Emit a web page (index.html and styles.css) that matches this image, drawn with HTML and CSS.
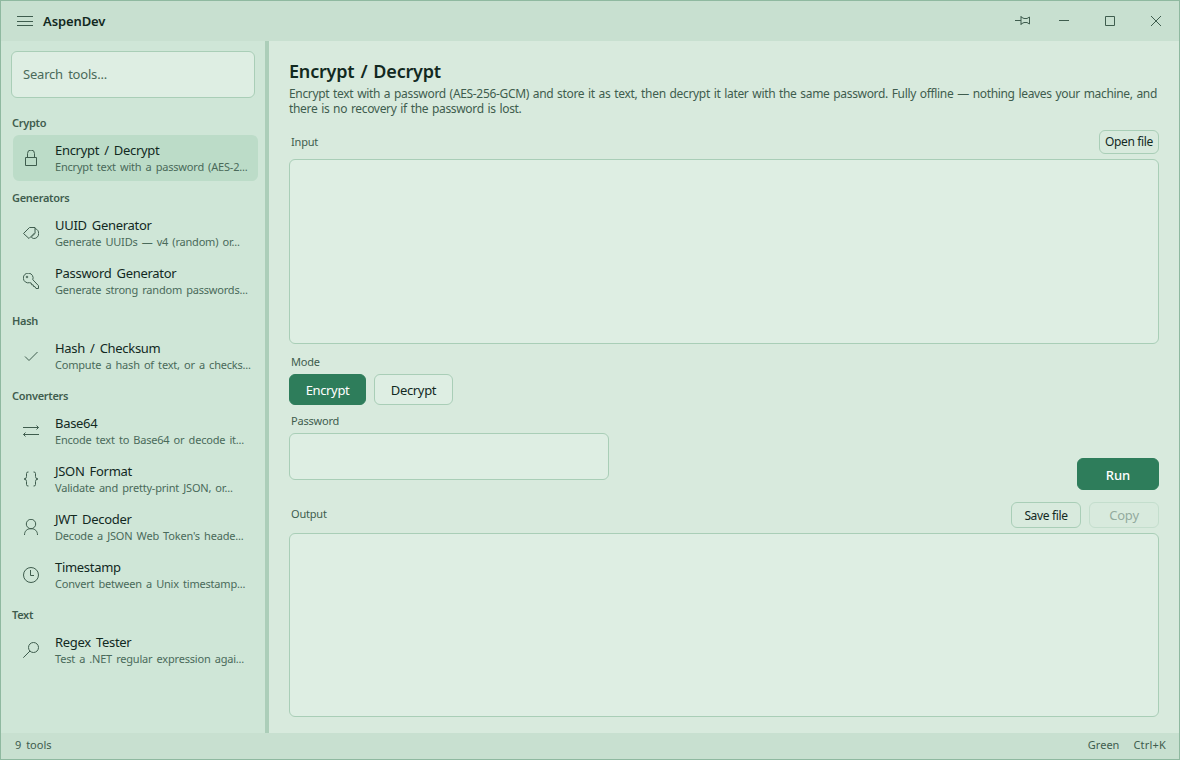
FILE: index.html
```html
<!DOCTYPE html>
<html lang="en">
<head>
    <meta charset="UTF-8">
    <meta name="viewport" content="width=device-width, initial-scale=1.0">
    <title>AspenDev</title>
    <link rel="stylesheet" href="styles.css">
</head>
<body>
    <div class="window">
        <header class="titlebar">
            <button class="menu-btn" aria-label="Menu">
                <svg width="16" height="16" viewBox="0 0 16 16"><path d="M0 3.5h16M0 8.5h16M0 12.5h16"/></svg>
            </button>
            <span class="app-name">AspenDev</span>
            <div class="window-controls">
                <button aria-label="Pin"><svg width="16" height="16" viewBox="0 0 16 16"><path d="M0 7.5h6M6 3v9M6 4l3 1.5h3L14.5 4v7L12 9.5H9L6 11"/></svg></button>
                <button aria-label="Minimize"><svg width="16" height="16" viewBox="0 0 16 16"><path d="M3 7.5h10"/></svg></button>
                <button aria-label="Maximize"><svg width="16" height="16" viewBox="0 0 16 16"><path d="M3.5 3.5h9v9h-9z"/></svg></button>
                <button aria-label="Close"><svg width="16" height="16" viewBox="0 0 16 16"><path d="M3 3l10 10M13 3L3 13"/></svg></button>
            </div>
        </header>

        <div class="body">
            <!-- Tool list -->
            <aside class="sidebar">
                <input type="text" class="search" placeholder="Search tools...">

                <h2>Crypto</h2>
                <a class="tool active">
                    <svg width="16" height="16" viewBox="0 0 16 16"><path d="M2.5 7.5h11v8h-11zM4.5 7.5V3.5a3.5 3.5 0 0 1 7 0v4"/></svg>
                    <div><div class="name">Encrypt / Decrypt</div><div class="hint">Encrypt text with a password (AES-2...</div></div>
                </a>

                <h2>Generators</h2>
                <a class="tool">
                    <svg width="16" height="16" viewBox="0 0 16 16"><path d="M.5 8.5L6.5 2.5h5.5V7.5L6 13.5zM12 3.5c2.5.8 3.7 2.7 3.7 5 0 3-2.2 5-4.7 5-1 0-2-.5-2.7-1.5L12.5 8"/></svg>
                    <div><div class="name">UUID Generator</div><div class="hint">Generate UUIDs — v4 (random) or...</div></div>
                </a>
                <a class="tool">
                    <svg width="16" height="16" viewBox="0 0 16 16"><path d="M9.8 6.7a4.9 4.9 0 1 0-3.3 3l1.7.3.3 1.7 1.7.2.3 1.6 1.5.2 1 1.8h2.5v-2.8z"/><circle cx="4" cy="4" r=".8"/></svg>
                    <div><div class="name">Password Generator</div><div class="hint">Generate strong random passwords...</div></div>
                </a>

                <h2>Hash</h2>
                <a class="tool">
                    <svg width="16" height="16" viewBox="0 0 16 16"><path d="M2 8.5L6 12.5L14.5 4"/></svg>
                    <div><div class="name">Hash / Checksum</div><div class="hint">Compute a hash of text, or a checks...</div></div>
                </a>

                <h2>Converters</h2>
                <a class="tool">
                    <svg width="16" height="16" viewBox="0 0 16 16"><path d="M0 4.5h15.5M13.5 2.5l2 2-2 2M16 11.5H.5M2.5 9.5l-2 2 2 2"/></svg>
                    <div><div class="name">Base64</div><div class="hint">Encode text to Base64 or decode it...</div></div>
                </a>
                <a class="tool">
                    <svg width="16" height="16" viewBox="0 0 16 16"><path d="M5.5 1H5Q3.5 1 3.5 2.5v3Q3.5 8 1 8q2.5 0 2.5 2.5v3Q3.5 15 5 15h.5M10.5 1h.5q1.5 0 1.5 1.5v3Q12.5 8 15 8q-2.5 0-2.5 2.5v3q0 1.5-1.5 1.5h-.5"/></svg>
                    <div><div class="name">JSON Format</div><div class="hint">Validate and pretty-print JSON, or...</div></div>
                </a>
                <a class="tool">
                    <svg width="16" height="16" viewBox="0 0 16 16"><circle cx="8" cy="5" r="4.7"/><path d="M1.5 16c0-4 2.5-6.3 6.5-6.3s6.5 2.3 6.5 6.3"/></svg>
                    <div><div class="name">JWT Decoder</div><div class="hint">Decode a JSON Web Token's heade...</div></div>
                </a>
                <a class="tool">
                    <svg width="16" height="16" viewBox="0 0 16 16"><circle cx="8" cy="8" r="7.5"/><path d="M7.5 3v5.5H11"/></svg>
                    <div><div class="name">Timestamp</div><div class="hint">Convert between a Unix timestamp...</div></div>
                </a>

                <h2>Text</h2>
                <a class="tool">
                    <svg width="16" height="16" viewBox="0 0 16 16"><circle cx="10.5" cy="5.5" r="5"/><path d="M7 9L.3 15.7"/></svg>
                    <div><div class="name">Regex Tester</div><div class="hint">Test a .NET regular expression agai...</div></div>
                </a>
            </aside>

            <!-- Selected tool -->
            <main class="content">
                <h1>Encrypt / Decrypt</h1>
                <p class="description">Encrypt text with a password (AES-256-GCM) and store it as text, then decrypt it later with the same password. Fully offline — nothing leaves your machine, and<br>there is no recovery if the password is lost.</p>

                <div class="row input-row">
                    <label for="input">Input</label>
                    <button class="btn open-btn">Open file</button>
                </div>
                <textarea id="input"></textarea>

                <label class="mode-label">Mode</label>
                <div class="modes">
                    <button class="btn primary encrypt-btn">Encrypt</button>
                    <button class="btn filled">Decrypt</button>
                </div>

                <div class="password-row">
                    <div class="field">
                        <label for="password">Password</label>
                        <input type="password" id="password">
                    </div>
                    <button class="btn primary run-btn">Run</button>
                </div>

                <div class="row output-row">
                    <label for="output">Output</label>
                    <div class="actions">
                        <button class="btn save-btn">Save file</button>
                        <button class="btn copy-btn" disabled>Copy</button>
                    </div>
                </div>
                <textarea id="output" readonly></textarea>
            </main>
        </div>

        <footer class="statusbar">
            <span>9 tools</span>
            <span class="theme">Green</span>
            <span class="shortcut">Ctrl+K</span>
        </footer>
    </div>
</body>
</html>
```
FILE: styles.css
```css
* {
    box-sizing: border-box;
}

body {
    margin: 0;
    font-family: "Noto Sans", "Open Sans", sans-serif;
    font-size: 12px;
    color: #12291f;
}

button, input, textarea {
    font-family: inherit;
    margin: 0;
}

svg {
    display: block;
    fill: none;
    stroke: #3f5d4e;
    stroke-width: 1;
}

.window {
    display: flex;
    flex-direction: column;
    width: 100%;
    height: 100vh;
    border: 1px solid #8fb9a0;
    background-color: #d8eadd;
    overflow: hidden;
}

/* Title bar */
.titlebar {
    display: flex;
    align-items: center;
    flex: 0 0 40px;
    padding-left: 16px;
    background-color: #c8e0d0;
}

.titlebar button {
    border: none;
    padding: 0;
    background: none;
}

.app-name {
    margin-left: 10px;
    font-size: 13px;
    font-weight: 600;
    letter-spacing: -0.1px;
}

.window-controls {
    display: flex;
    margin-left: auto;
}

.window-controls button {
    display: flex;
    justify-content: center;
    width: 46px;
}

.window-controls button:first-child {
    width: 36px;
}

.body {
    display: flex;
    flex: 1;
    min-height: 0;
}

/* Sidebar */
.sidebar {
    display: flex;
    flex-direction: column;
    flex: 0 0 268px;
    padding: 10px 7px 0 10px;
    border-right: 4px solid #acceb9;
    background-color: #cfe6d7;
}

.search {
    width: 244px;
    height: 47px;
    margin-bottom: 9px;
    padding: 0 11px 2px;
    border: 1px solid #a9ceb7;
    border-radius: 6px;
    background-color: #deeee3;
    font-size: 13px;
    letter-spacing: -0.2px;
    word-spacing: 2px;
}

.search::placeholder {
    color: #4a6a5a;
}

.sidebar h2 {
    height: 27px;
    margin: 0;
    padding: 8px 0 0 1px;
    font-size: 11px;
    font-weight: 600;
    line-height: 16px;
    letter-spacing: -0.3px;
    color: #3f5d4e;
}

.tool {
    display: flex;
    align-items: center;
    height: 46px;
    margin: 1px 0 1px 2px;
    padding-left: 10px;
    border-radius: 6px;
}

.tool.active {
    background-color: #bcdcc8;
}

.tool svg {
    flex: none;
    margin-right: 16px;
}

.tool > div {
    padding-bottom: 2px;
}

.name {
    font-size: 13px;
    line-height: 18px;
    letter-spacing: -0.3px;
    word-spacing: 2px;
    white-space: nowrap;
}

.hint {
    font-size: 11px;
    line-height: 15px;
    letter-spacing: -0.2px;
    word-spacing: 1.5px;
    white-space: nowrap;
    color: #4a6a5a;
}

/* Content */
.content {
    display: flex;
    flex-direction: column;
    flex: 1;
    min-width: 0;
    padding: 18px 20px 16px;
}

h1 {
    height: 27px;
    margin: 0;
    font-size: 18px;
    font-weight: 600;
    line-height: 25px;
    letter-spacing: -0.2px;
    word-spacing: 1.5px;
}

.description {
    margin: 0;
    line-height: 15px;
    letter-spacing: -0.33px;
    word-spacing: 1px;
    white-space: nowrap;
    color: #3f5d4e;
}

label {
    padding-left: 2px;
    font-size: 11px;
    line-height: 15px;
    letter-spacing: -0.2px;
    color: #3f5d4e;
}

.row {
    display: flex;
    align-items: center;
    justify-content: space-between;
}

.row label {
    padding-bottom: 2px;
}

.input-row {
    margin: 14px 0 5px;
}

textarea {
    flex: 1;
    border: 1px solid #a9ceb7;
    border-radius: 6px;
    background-color: #deeee3;
    resize: none;
}

.btn {
    padding: 0;
    border: 1px solid #a9ceb7;
    border-radius: 6px;
    background-color: #d8eadd;
    font-size: 12px;
    letter-spacing: -0.35px;
    color: #12291f;
}

.btn.filled {
    width: 79px;
    background-color: #deeee3;
}

.btn.primary {
    border-color: #2e7d5b;
    background-color: #2e7d5b;
    color: #fff;
}

.open-btn {
    width: 60px;
    height: 24px;
    padding-bottom: 1px;
}

.mode-label {
    margin: 10px 0 5px;
}

.modes {
    display: flex;
    gap: 8px;
    height: 31px;
}

.modes .btn {
    padding-top: 2px;
    font-size: 13px;
}

.encrypt-btn {
    width: 77px;
}

.password-row {
    display: flex;
    justify-content: space-between;
    height: 85px;
}

.field {
    display: flex;
    flex-direction: column;
    width: 320px;
    padding-top: 8px;
}

.field input {
    height: 47px;
    margin-top: 5px;
    border: 1px solid #a9ceb7;
    border-radius: 6px;
    background-color: #deeee3;
}

.btn.run-btn {
    align-self: flex-end;
    width: 82px;
    height: 32px;
    padding-top: 3px;
    font-size: 13px;
    font-weight: 500;
    letter-spacing: 0;
}

.output-row {
    margin: 12px 0 5px;
}

.actions {
    display: flex;
    gap: 8px;
}

.actions .btn {
    width: 70px;
    height: 26px;
}

.actions .save-btn {
    padding-top: 2px;
}

.actions .copy-btn {
    border-color: #c4decd;
    font-size: 13px;
    letter-spacing: -0.2px;
    color: #93ab9d;
}

/* Status bar */
.statusbar {
    display: flex;
    align-items: center;
    flex: 0 0 26px;
    padding: 0 13px 4px 14px;
    background-color: #c8e0d0;
    font-size: 11px;
    word-spacing: 2px;
    color: #3f5d4e;
}

.theme {
    margin: 0 14px 0 auto;
}

.shortcut {
    letter-spacing: 0.2px;
}
```
